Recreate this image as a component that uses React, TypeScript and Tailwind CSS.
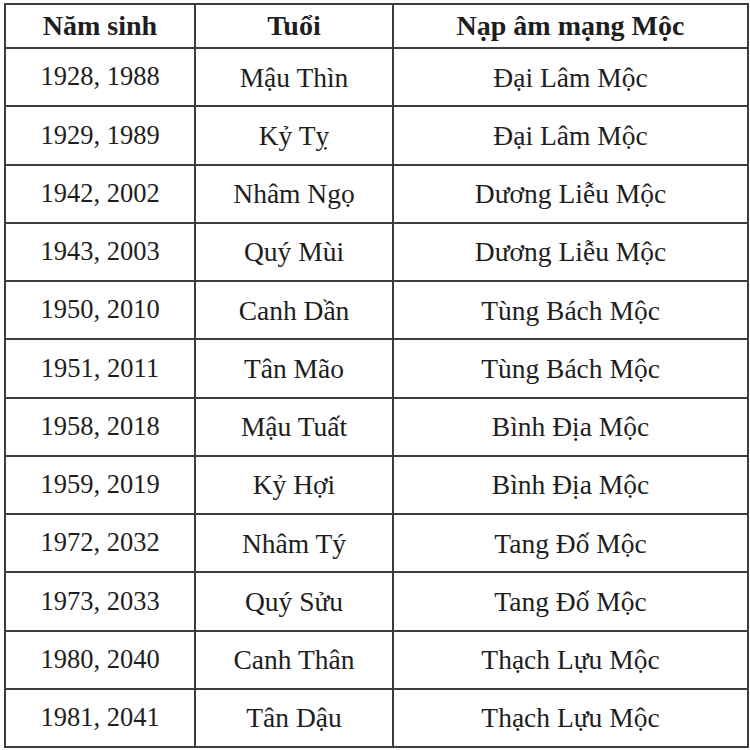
const rows: [string, string, string][] = [
  ['1928, 1988', 'Mậu Thìn', 'Đại Lâm Mộc'],
  ['1929, 1989', 'Kỷ Tỵ', 'Đại Lâm Mộc'],
  ['1942, 2002', 'Nhâm Ngọ', 'Dương Liễu Mộc'],
  ['1943, 2003', 'Quý Mùi', 'Dương Liễu Mộc'],
  ['1950, 2010', 'Canh Dần', 'Tùng Bách Mộc'],
  ['1951, 2011', 'Tân Mão', 'Tùng Bách Mộc'],
  ['1958, 2018', 'Mậu Tuất', 'Bình Địa Mộc'],
  ['1959, 2019', 'Kỷ Hợi', 'Bình Địa Mộc'],
  ['1972, 2032', 'Nhâm Tý', 'Tang Đố Mộc'],
  ['1973, 2033', 'Quý Sửu', 'Tang Đố Mộc'],
  ['1980, 2040', 'Canh Thân', 'Thạch Lựu Mộc'],
  ['1981, 2041', 'Tân Dậu', 'Thạch Lựu Mộc'],
];

const cell = 'flex items-center justify-center border-r-2 border-b-2 border-[#3d3d3d]';

export default function App() {
  return (
    <div className="w-[750px] h-[750px] bg-white pt-[3px] pl-[4px] text-[#1e1e1e] font-['Liberation_Serif','Times_New_Roman',serif]">
      <div className="grid grid-cols-[190px_198px_355px] w-[745px] border-l-2 border-t-2 border-[#3d3d3d]">
        {/* header */}
        <div className={`${cell} h-[44px] text-[28px] font-bold`}>Năm sinh</div>
        <div className={`${cell} h-[44px] text-[28px] font-bold`}>Tuổi</div>
        <div className={`${cell} h-[44px] text-[28px] font-bold`}>Nạp âm mạng Mộc</div>

        {rows.map(([year, age, menh]) => (
          <div key={year} className="contents">
            <div className={`${cell} h-[58.25px] text-[26.5px]`}>{year}</div>
            <div className={`${cell} h-[58.25px] text-[27.5px]`}>{age}</div>
            <div className={`${cell} h-[58.25px] text-[27.5px]`}>{menh}</div>
          </div>
        ))}
      </div>
    </div>
  );
}
